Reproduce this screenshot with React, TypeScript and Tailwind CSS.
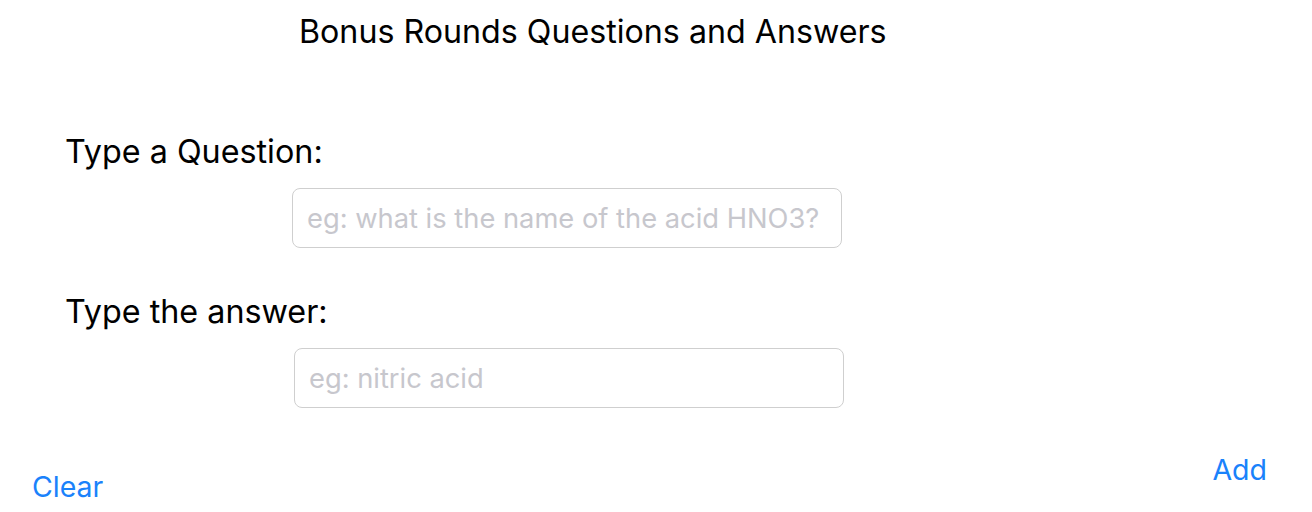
export default function App() {
  return (
    <div
      className="w-[1312px] h-[512px] bg-white flex flex-col text-black overflow-hidden"
      style={{ fontFamily: "Inter, 'Noto Sans', sans-serif" }}
    >
      <h1 className="pl-[299px] pt-[12px] text-[32.2px] leading-[40px] font-normal">
        Bonus Rounds Questions and Answers
      </h1>

      <div className="pl-[65px] pt-[80px] text-[32.3px] leading-[40px]">Type a Question:</div>
      <div className="pl-[292px] pt-[16px]">
        <input
          className="w-[550px] h-[60px] border border-[#cfcfcf] rounded-[8px] px-[14px] text-[27.3px] outline-none placeholder:text-[#c7c7cd]"
          placeholder="eg: what is the name of the acid HNO3?"
        />
      </div>

      <div className="pl-[65px] pt-[44px] text-[32.3px] leading-[40px]">Type the answer:</div>
      <div className="pl-[294px] pt-[16px]">
        <input
          className="w-[550px] h-[60px] border border-[#cfcfcf] rounded-[8px] px-[14px] text-[27.3px] outline-none placeholder:text-[#c7c7cd]"
          placeholder="eg: nitric acid"
        />
      </div>

      <div className="flex justify-between items-start pt-[45px] pl-[32px] pr-[45px] text-[#1a82fb] text-[28.5px] leading-[34px]">
        <button className="mt-[17px]">Clear</button>
        <button>Add</button>
      </div>
    </div>
  );
}
